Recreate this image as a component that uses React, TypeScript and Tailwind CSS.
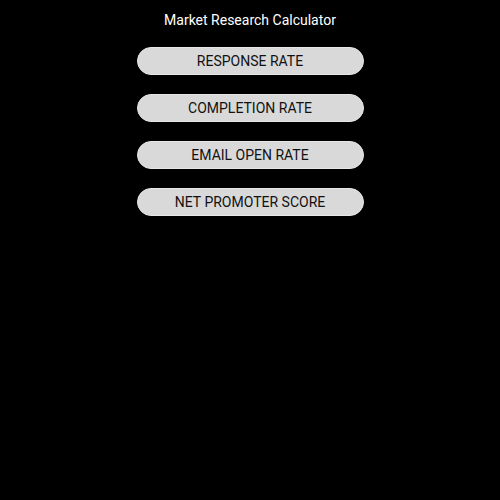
const items = ['RESPONSE RATE', 'COMPLETION RATE', 'EMAIL OPEN RATE', 'NET PROMOTER SCORE'];

export default function App() {
  return (
    <div className="w-[500px] h-[500px] bg-black flex flex-col items-center font-['Roboto',sans-serif]">
      <h1 className="mt-[11px] text-[14px] leading-[18px] text-white">Market Research Calculator</h1>
      <div className="mt-[18px] flex flex-col gap-[19px]">
        {items.map((label) => (
          <button
            key={label}
            className="w-[227px] h-[28px] rounded-full bg-[#d9d9d9] border border-[#e6e6e6] text-[14px] text-[#111111] flex items-center justify-center"
          >
            {label}
          </button>
        ))}
      </div>
    </div>
  );
}
